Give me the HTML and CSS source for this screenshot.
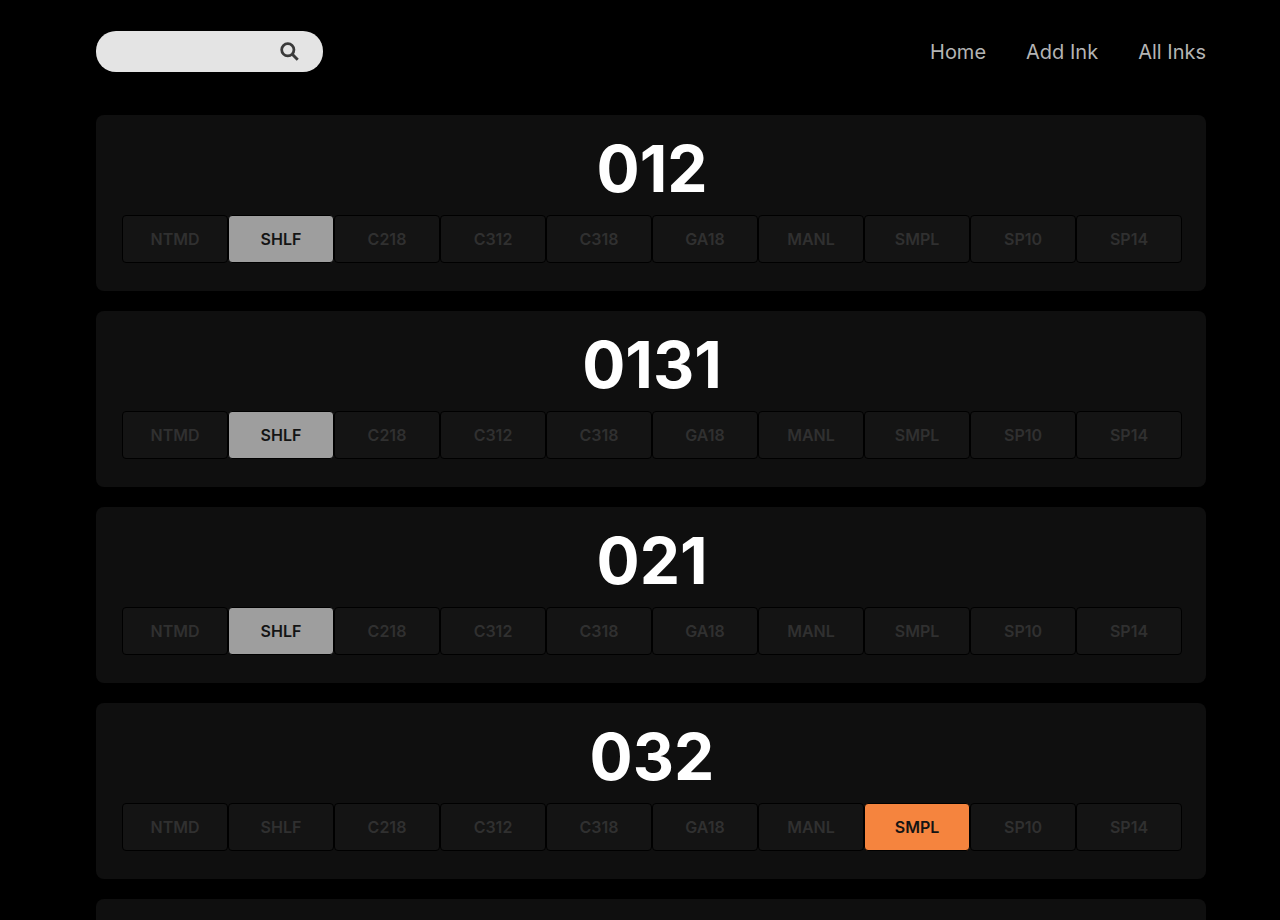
FILE: index.html
```html
<!DOCTYPE html>
<html lang="en">
<head>
    <meta charset="UTF-8">
    <meta name="viewport" content="width=device-width, initial-scale=1.0">
    <title>All Inks</title>
    <link rel="stylesheet" href="styles.css">
</head>
<body>
    <div class="page">
        <header class="topbar">
            <div class="search">
                <input class="search-input" type="text" aria-label="Search">
                <svg class="search-icon" width="19" height="19" viewBox="0 0 18 18" aria-hidden="true">
                    <circle cx="7.4" cy="7.4" r="5.8" fill="none" stroke="currentColor" stroke-width="2.6"/>
                    <path d="M11.6 11.6L16.8 16.8" fill="none" stroke="currentColor" stroke-width="2.8"/>
                </svg>
            </div>
            <nav class="nav">
                <a href="#">Home</a>
                <a href="#">Add Ink</a>
                <a href="#">All Inks</a>
            </nav>
        </header>

        <section class="ink-card">
            <h1 class="ink-name">012</h1>
            <div class="locations">
                <button class="loc">NTMD</button>
                <button class="loc loc-shelf">SHLF</button>
                <button class="loc">C218</button>
                <button class="loc">C312</button>
                <button class="loc">C318</button>
                <button class="loc">GA18</button>
                <button class="loc">MANL</button>
                <button class="loc">SMPL</button>
                <button class="loc">SP10</button>
                <button class="loc">SP14</button>
            </div>
        </section>

        <section class="ink-card">
            <h1 class="ink-name">0131</h1>
            <div class="locations">
                <button class="loc">NTMD</button>
                <button class="loc loc-shelf">SHLF</button>
                <button class="loc">C218</button>
                <button class="loc">C312</button>
                <button class="loc">C318</button>
                <button class="loc">GA18</button>
                <button class="loc">MANL</button>
                <button class="loc">SMPL</button>
                <button class="loc">SP10</button>
                <button class="loc">SP14</button>
            </div>
        </section>

        <section class="ink-card">
            <h1 class="ink-name">021</h1>
            <div class="locations">
                <button class="loc">NTMD</button>
                <button class="loc loc-shelf">SHLF</button>
                <button class="loc">C218</button>
                <button class="loc">C312</button>
                <button class="loc">C318</button>
                <button class="loc">GA18</button>
                <button class="loc">MANL</button>
                <button class="loc">SMPL</button>
                <button class="loc">SP10</button>
                <button class="loc">SP14</button>
            </div>
        </section>

        <section class="ink-card">
            <h1 class="ink-name">032</h1>
            <div class="locations">
                <button class="loc">NTMD</button>
                <button class="loc">SHLF</button>
                <button class="loc">C218</button>
                <button class="loc">C312</button>
                <button class="loc">C318</button>
                <button class="loc">GA18</button>
                <button class="loc">MANL</button>
                <button class="loc loc-sample">SMPL</button>
                <button class="loc">SP10</button>
                <button class="loc">SP14</button>
            </div>
        </section>

        <section class="ink-card"></section>
    </div>
</body>
</html>
```

FILE: styles.css
```css
html, body {
    height: 100%;
    overflow: hidden;
}
body {
    margin: 0;
    background-color: #000;
    font-family: 'Inter', Arial, sans-serif;
}
.page {
    width: 1110px;
    margin-left: 96px;
}
.topbar {
    display: flex;
    justify-content: space-between;
    align-items: center;
    height: 41px;
    padding-top: 31px;
    margin-bottom: 43px;
}
.search {
    display: flex;
    align-items: center;
    box-sizing: border-box;
    width: 227px;
    height: 41px;
    padding-right: 24px;
    border-radius: 20px;
    background-color: #e4e4e4;
}
.search-input {
    flex: 1;
    min-width: 0;
    border: none;
    outline: none;
    background: transparent;
}
.search-icon {
    color: #3a3a3a;
}
.nav {
    display: flex;
    gap: 40px;
}
.nav a {
    color: #b4b4b4;
    font-size: 20px;
    text-decoration: none;
}
.ink-card {
    box-sizing: border-box;
    height: 176px;
    margin-bottom: 20px;
    padding: 16px 24px 0 26px;
    border-radius: 8px;
    background-color: #0f0f0f;
}
.ink-name {
    margin: 0 0 8px;
    color: #fff;
    font-size: 64px;
    font-weight: 700;
    line-height: 76px;
    text-align: center;
}
.locations {
    display: grid;
    grid-template-columns: repeat(10, 106px);
}
.loc {
    height: 48px;
    padding: 0;
    border: 1px solid #000;
    border-radius: 4px;
    background-color: #141414;
    color: #303030;
    font-family: inherit;
    font-size: 16px;
    font-weight: 600;
}
.loc-shelf {
    background-color: #9e9e9e;
    color: #141414;
}
.loc-sample {
    background-color: #f5843e;
    color: #141414;
}
```
